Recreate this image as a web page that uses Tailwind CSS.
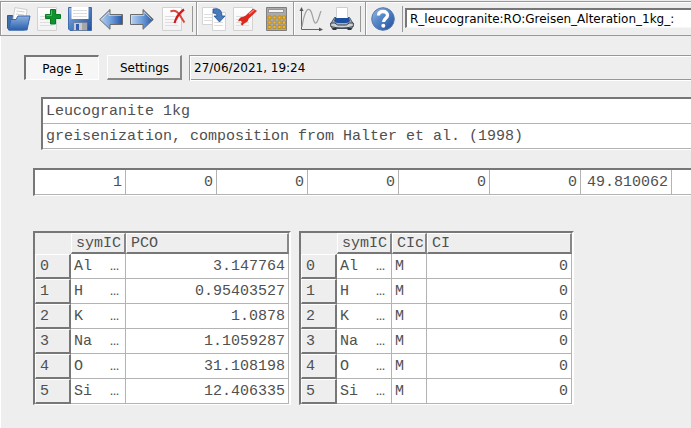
<!DOCTYPE html>
<html lang="en"><head><meta charset="utf-8"><title>Greisen Alteration</title>
<script src="https://cdn.jsdelivr.net/npm/@tailwindcss/browser@4"></script></head>
<body class="w-[691px] h-[428px] overflow-hidden bg-[#eeeeee] font-['DejaVu_Sans',sans-serif] text-[12px] text-black">
<svg class="absolute w-0 h-0"><defs>
<linearGradient id="blue" x1="0" y1="0" x2="1" y2="1"><stop stop-color="#9dbbe2"/><stop offset=".4" stop-color="#5a8acb"/><stop offset="1" stop-color="#204c98"/></linearGradient>
<linearGradient id="arrow" x1="0" y1="0" x2="1" y2="0"><stop stop-color="#b9d3f0"/><stop offset=".5" stop-color="#6f9edb"/><stop offset="1" stop-color="#2456a6"/></linearGradient>
<linearGradient id="paper" x1="0" y1="0" x2="0" y2="1"><stop stop-color="#fff"/><stop offset="1" stop-color="#f2f2f2"/></linearGradient>
<linearGradient id="folder" x1="0" y1="0" x2="0" y2="1"><stop stop-color="#8fb1df"/><stop offset="1" stop-color="#2a60ad"/></linearGradient>
<symbol id="sheet" viewBox="0 0 24 24"><path d="M.5.500h19v23h-19z" fill="url(#paper)" stroke="#d2d2d2"/><path d="M3 9.500h13M3 12.500h13M3 15.500h13M3 18.500h13" stroke="#dedede"/></symbol>
</defs></svg>
<div class="flex flex-col w-[691px] h-[428px] overflow-hidden">
<header class="flex flex-none mt-px border-t border-b border-[#989898] h-[35px]">
 <div class="flex items-start flex-none w-[197px] pl-[6px] pt-[5px] border-l border-r border-[#989898] shadow-[inset_1px_1px_0_#fff]">
  <svg class="shrink-0 w-6 h-6 mr-[6px]" viewBox="0 0 24 24"><path d="M.5 21V8.500h5l1 2h14v4l-3 8.500H2z" fill="#416fac" stroke="#325a91"/><path d="M8 .6l12 2-1.500 12H5.500z" fill="#fbfbfb" stroke="#c4c4c4" stroke-width=".8"/><path d="M9.500 4l8 1M9 7l8 1" stroke="#d0d0d0"/><path d="M1.500 23L4 12.500h5l2-3.500h12l-3 14z" fill="url(#folder)" stroke="#3567ad"/></svg>
  <svg class="shrink-0 w-[25px] h-6 mr-[6px]" viewBox="0 0 25 24"><use href="#sheet" width="24" height="24"/><path d="M13.500 2.500h5v5h5v4h-5v5.500h-5v-5.500H8.500v-4h5z" fill="#129330" stroke="#087b22"/><path d="M14.500 3.500v5h-5" stroke="#55bd61" fill="none"/></svg>
  <svg class="shrink-0 w-6 h-6 mr-[7px]" viewBox="0 0 24 24"><path d="M.5.500h23v23H2L.5 22z" fill="url(#blue)" stroke="#3e6cad"/><path d="M3.500 0h17v12h-17z" fill="#fff"/><path d="M5 3.500h14M5 6.500h14M5 9.500h14" stroke="#dedede"/><path d="M5.500 15.500h13.500v8H5.500z" fill="#c8cbd0" stroke="#6d7f9a"/><path d="M8 17h3v6H8z" fill="#315fae"/><path d="M14 16h5v7h-5z" fill="#a4a6a9"/></svg>
  <svg class="shrink-0 w-6 h-6 mr-[7px]" viewBox="0 0 24 24"><path d="M.7 12.500L11 2.500V7.500h12.500v10H11v4.800z" fill="url(#arrow)" stroke="#6c6c6c"/><path d="M2.500 12.500L10 5v3.500h12.500" fill="none" stroke="#dfebf9" stroke-width=".6"/></svg>
  <svg class="shrink-0 w-6 h-6 mr-[8px]" viewBox="0 0 24 24"><path d="M23.300 12.500L13 2.500V7.500H.5v10H13v4.800z" fill="url(#arrow)" stroke="#6c6c6c"/><path d="M1.500 16.500v-8H14V5l7.500 7.500" fill="none" stroke="#dfebf9" stroke-width=".6"/></svg>
  <svg class="shrink-0 w-6 h-6" viewBox="0 0 24 24"><use href="#sheet" width="24" height="24"/><path d="M8.500 4.500Q14 2 18 8.500t4.500 7" fill="none" stroke="#d8493d" stroke-width="2"/><path d="M22 2.500q-7 5-9.500 13.500" fill="none" stroke="#d5171a" stroke-width="2.200"/></svg>
  <i class="block shrink-0 w-px h-[26px] ml-[6px] -mt-px bg-[#989898]"></i>
 </div>
 <div class="flex items-start flex-none w-[97px] pl-[5px] pt-[5px] border-r border-[#989898] shadow-[inset_1px_1px_0_#fff]">
  <svg class="shrink-0 w-6 h-6 mr-[7px]" viewBox="0 0 24 24"><path d="M.5.500h14v17H.5z" fill="#fff" stroke="#d4d4d4"/><path d="M2 7.500h8M2 10.500h8M2 13.500h8" stroke="#ddd"/><path d="M10.500 5.500h13v18h-13z" fill="#fff" stroke="#d4d4d4"/><path d="M12 15.500h9M12 18.500h9" stroke="#ddd"/><path d="M11 2q9-2 9 7h3l-5.500 6L12 9h3q0-3-4-3z" fill="#477bbd" stroke="#265493" stroke-width=".8"/></svg>
  <svg class="shrink-0 w-6 h-6 mr-[9px]" viewBox="0 0 24 24"><use href="#sheet" width="24" height="24"/><path d="M20 2l3.500 2-8.500 8q0 3-3 3.500l-2 2q-1 1.500-2-.5l1.500-2-2-1.500-2 .5q1-4 5-4l2-1z" fill="#e2261c" stroke="#bd221a" stroke-width=".6"/><path d="M16 7l5-4" stroke="#ff8175" stroke-width="1.500"/></svg>
  <svg class="shrink-0 w-[22px] h-6" viewBox="0 0 22 24"><path d="M.5.500h20v23H.5z" fill="#aaa" stroke="#7f7f7f"/><path d="M2.500 2.500h15v3h-15z" fill="#f3f3f3" stroke="#7d7d7d" stroke-width=".7"/><g fill="#f4b827" stroke="#a97b19" stroke-width=".6"><path d="M2 9h3v3H2zM7 9h3v3H7zM12 9h3v3h-3zM16.500 9h3v3h-3zM2 14h3v3H2zM7 14h3v3H7zM12 14h3v3h-3zM16.500 14h3v3h-3zM2 18.500h3v3H2zM7 18.500h3v3H7zM12 18.500h3v3h-3zM16.500 18.500h3v3h-3z"/></g></svg>
 </div>
 <div class="flex items-start flex-none w-[72px] pl-[5px] pt-[5px] border-r border-[#989898] shadow-[inset_1px_1px_0_#fff]">
  <svg class="shrink-0 w-6 h-6 mr-[7px]" viewBox="0 0 24 24"><path d="M2.500 1v21.500H23" stroke="#666" fill="none"/><path d="M.5 4l2-4 2 4zM20 20.500l4 2-4 2z" fill="#555"/><path d="M3 20C5 7 8 0 11 3s3 14 6 13c2-1 3-7 5-12" fill="none" stroke="#a0a0a0" stroke-width="1.200"/></svg>
  <svg class="shrink-0 w-6 h-6" viewBox="0 0 24 24"><path d="M4.500 10.500h15l3.500 6-1 5H2l-1-5z" fill="#a7afb8" stroke="#4c555e"/><path d="M6.500.5h11v11h-11z" fill="#fff" stroke="#cecece"/><path d="M5 11h14l1 3q-1 2-4 2H8q-3 0-4-2z" fill="#1f4f9f"/><path d="M.7 16h4l3 2h8.600l3-2h4v3.500q-5 1.500-11.300 1.500T.7 19.500z" fill="#cbd0d5" stroke="#39424c"/><path d="M2.500 21h4v2h-4zm15 0h4v2h-4z" fill="#30353a"/></svg>
  <i class="block shrink-0 w-px h-[26px] ml-[6px] -mt-px bg-[#989898]"></i>
 </div>
 <div class="flex items-start flex-none w-[326px] pl-[5px] pt-[5px] shadow-[inset_1px_1px_0_#fff]">
  <svg class="shrink-0 w-6 h-6" viewBox="0 0 24 24"><circle cx="12" cy="12" r="11.300" fill="url(#blue)" stroke="#5579ab"/><path d="M7.500 8.500C7.500 5.500 9.500 4.500 12 4.500s4.500 1.500 4.500 4-4 3-4 6.500" fill="none" stroke="#fff" stroke-width="3.300"/><circle cx="12.300" cy="18.800" r="2" fill="#fff"/></svg>
  <i class="block shrink-0 w-px h-[26px] ml-[7px] -mt-px bg-[#989898]"></i>
  <div class="flex-none w-[300px] h-[20px] ml-[2px] mt-[1px] pl-[3px] border-t-2 border-l-2 border-b border-t-[#777] border-l-[#777] border-b-[#f7f7f7] bg-white leading-[18px] whitespace-nowrap">R_leucogranite:RO:Greisen_Alteration_1kg_:</div>
 </div>
</header>
<main class="flex flex-col flex-1 border-l border-white">
 <div class="flex ml-[23px] mt-[19px] h-[26px]">
  <div class="w-[75px] h-[25px] border-t-2 border-l-2 border-t-[#777] border-l-[#777] border-b border-r border-b-white border-r-white bg-[#f6f6f6] text-center leading-[24px] pl-[1px]">Page <u>1</u></div>
  <div class="w-[75px] h-[25px] ml-[8px] border-t border-l border-t-white border-l-white border-b-2 border-r-2 border-b-[#888] border-r-[#888] text-center leading-[24px] pl-[1px]">Settings</div>
  <div class="flex-1 h-[26px] ml-[7px] border-y border-l border-[#989898] border-b-white shadow-[inset_1px_1px_0_#fff,inset_0_-1px_0_#989898] pl-[4px] leading-[24px]">27/06/2021, 19:24</div>
 </div>
 <div class="font-['Liberation_Mono',monospace] text-[15px] text-[#505050] whitespace-nowrap">
  <div class="ml-[40px] mt-[16px] h-[53px] border-t-2 border-l-2 border-t-[#777] border-l-[#777] border-b border-b-white bg-white">
   <div class="h-[25px] border-b border-[#b3b3b3] pl-[3px] leading-[25px]">Leucogranite 1kg</div>
   <div class="h-[25px] border-b border-[#b3b3b3] pl-[3px] leading-[25px]">greisenization, composition from Halter et al. (1998)</div>
  </div>
  <div id="values" class="flex ml-[32px] mt-[18px] h-[28px] overflow-hidden border-t-2 border-l-2 border-t-[#777] border-l-[#777] border-b border-b-white bg-white"></div>
  <div class="flex ml-[32px] mt-[35px] gap-[8px]">
   <div id="left" class="flex-none w-[258px] h-[174px] border-t-2 border-l-2 border-t-[#777] border-l-[#777] border-b border-b-white border-r-2 border-r-white bg-white"></div>
   <div id="right" class="flex-none w-[275px] h-[174px] border-t-2 border-l-2 border-t-[#777] border-l-[#777] border-b border-b-white border-r-2 border-r-white bg-white"></div>
  </div>
 </div>
</main>
</div>
<script>
document.getElementById('values').innerHTML=['1','0','0','0','0','0','49.810062',''].map(v=>`<div class="flex-none w-[91px] h-[25px] border-r border-b border-[#b3b3b3] pr-[3px] text-right leading-[25px]">${v}</div>`).join('');
const symbols=['Al','H','K','Na','O','Si'];
const amounts=['3.147764','0.95403527','1.0878','1.1059287','31.108198','12.406335'];
function table(id,right){
 const heading='flex-none h-[21px] border-t border-l border-t-white border-l-white border-b-2 border-r-2 border-b-[#777] border-r-[#888] bg-[#eee] pl-[4px] leading-[19px]';
 let html=`<div class="flex h-[21px]"><div class="w-[36px] bg-[#eee]"></div><div class="${heading} w-[55px]">symIC</div>`;
 html+=right?`<div class="${heading} w-[35px]">CIc</div><div class="${heading} w-[145px]">CI</div>`:`<div class="${heading} w-[163px]">PCO</div>`;
 html+='</div>';
 symbols.forEach((s,i)=>{html+=`<div class="flex h-[25px]"><div class="w-[36px] border-t border-l border-t-white border-l-white border-b-2 border-r-2 border-b-[#777] border-r-[#777] bg-[#eee] pl-[4px] leading-[23px]">${i}</div><div class="flex justify-between w-[55px] border-r border-b border-[#b3b3b3] pl-[3px] pr-[6px] leading-[25px]"><span>${s}</span><span>…</span></div>`;
 if(right) html+='<div class="w-[35px] border-r border-b border-[#b3b3b3] pl-[3px] leading-[25px]">M</div>';
 html+=`<div class="${right?'w-[145px]':'w-[163px]'} border-r border-b border-[#b3b3b3] pr-[3px] text-right leading-[25px]">${right?'0':amounts[i]}</div></div>`});
 document.getElementById(id).innerHTML=html;
}
table('left',false);table('right',true);
</script>
</body></html>
